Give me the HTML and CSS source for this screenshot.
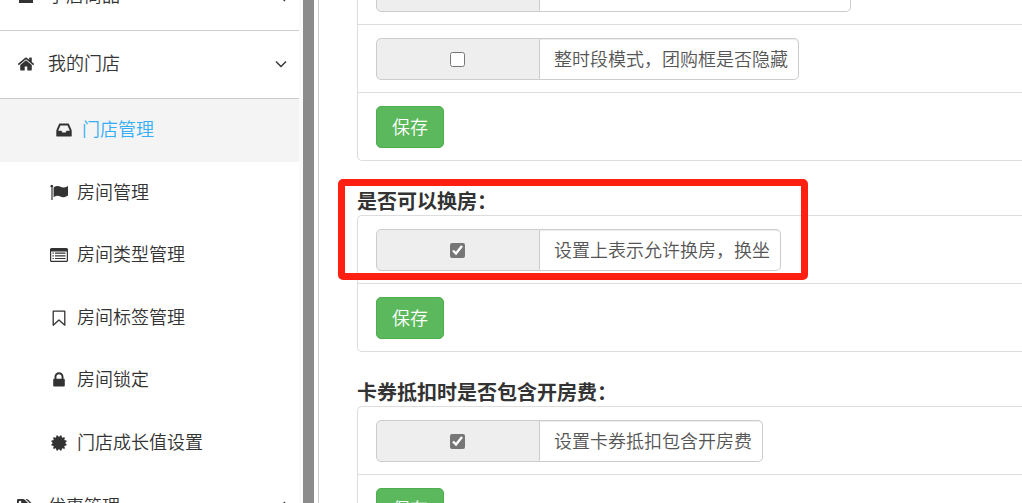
FILE: index.html
```html
<!DOCTYPE html>
<html lang="zh-CN">
<head>
<meta charset="utf-8">
<title>门店管理</title>
<link rel="stylesheet" href="styles.css">
</head>
<body>
<div class="shell">
  <nav class="sidebar">
    <div class="menu">
      <a class="menu-item" href="#">
        <svg class="icon" viewBox="0 0 18 18"><path d="M3 3h12v12H3zM2 13h14v3H2z"/></svg>
        <span>子店商品</span>
        <svg class="arrow" viewBox="0 0 12 12"><path d="M10 1 5 6l5 5"/></svg>
      </a>
      <a class="menu-item" href="#">
        <svg class="icon" viewBox="0 0 1792 1792"><path d="M1472 992v480q0 26-19 45t-45 19h-384v-384h-256v384h-384q-26 0-45-19t-19-45v-480q0-1 .5-3t.5-3l575-474 575 474q1 2 1 6zm223-69l-62 74q-8 9-21 11h-3q-13 0-21-7l-692-577-692 577q-12 8-24 7-13-2-21-11l-62-74q-8-10-7-23.5t11-21.5l719-599q32-26 76-26t76 26l244 204v-195q0-14 9-23t23-9h192q14 0 23 9t9 23v408l219 182q10 8 11 21.5t-7 23.5z"/></svg>
        <span>我的门店</span>
        <svg class="arrow" viewBox="0 0 12 12"><path d="M1 3.500l5 5 5-5"/></svg>
      </a>
      <div class="submenu">
        <a class="sub-item active" href="#">
          <svg class="icon" viewBox="0 0 1792 1792"><path d="M1151 960h316q-1-3-2.500-8t-2.500-8l-212-496h-708l-212 496q-1 2-2.500 8t-2.500 8h316l95 192h320zm513 30v482q0 26-19 45t-45 19h-1408q-26 0-45-19t-19-45v-482q0-62 25-123l238-552q10-25 36.500-42t52.500-17h832q26 0 52.500 17t36.500 42l238 552q25 61 25 123z"/></svg>
          <span>门店管理</span>
        </a>
        <a class="sub-item" href="#">
          <svg class="icon" viewBox="0 0 18 18"><path d="M1 3.200a1.300 1.300 0 1 1 1.600 0V16H1.400V3.200zM3.600 3.400C6 1.900 8 1.500 10.500 2.800c2.300 1.200 4.200.8 7.500-.9v9.600c-3 1.900-5.200 2.300-7.700 1-2.300-1.200-4.300-.8-6.700.7z"/></svg>
          <span>房间管理</span>
        </a>
        <a class="sub-item" href="#">
          <svg class="icon" viewBox="0 0 18 18"><path fill-rule="evenodd" d="M1.500 2h15A1.500 1.500 0 0 1 18 3.500v11a1.500 1.500 0 0 1-1.500 1.500h-15A1.500 1.500 0 0 1 0 14.500v-11A1.500 1.500 0 0 1 1.500 2zM1.200 5.500v8.800q0 .5.500.5h14.600q.5 0 .5-.5V5.500zM2.500 6.500h1.300v1.200H2.500zM5 6.500h10.500v1.200H5zM2.500 9.200h1.300v1.200H2.500zM5 9.200h10.500v1.200H5zM2.500 11.900h1.300v1.200H2.500zM5 11.900h10.500v1.200H5z"/></svg>
          <span>房间类型管理</span>
        </a>
        <a class="sub-item" href="#">
          <svg class="icon" viewBox="0 0 18 18"><path fill="none" stroke="currentColor" stroke-width="1.300" stroke-linejoin="round" d="M3.200 2.200h11.600v14L9 11l-5.800 5.200z"/></svg>
          <span>房间标签管理</span>
        </a>
        <a class="sub-item" href="#">
          <svg class="icon" viewBox="0 0 1792 1792"><path d="M640 768h512v-192q0-106-75-181t-181-75-181 75-75 181v192zm832 96v576q0 40-28 68t-68 28h-960q-40 0-68-28t-28-68v-576q0-40 28-68t68-28h32v-192q0-184 132-316t316-132 316 132 132 316v192h32q40 0 68 28t28 68z"/></svg>
          <span>房间锁定</span>
        </a>
        <a class="sub-item" href="#">
          <svg class="icon" viewBox="0 0 1792 1792"><path d="M1504 896l138 135q30 28 20 70-12 41-52 51l-188 48 53 186q12 41-19 70-29 31-70 19l-186-53-48 188q-10 40-51 52-12 2-19 2-31 0-51-22l-135-138-135 138q-28 30-70 20-41-11-51-52l-48-188-186 53q-41 12-70-19-31-29-19-70l53-186-188-48q-40-10-52-51-10-42 20-70l138-135-138-135q-30-28-20-70 12-41 52-51l188-48-53-186q-12-41 19-70 29-31 70-19l186 53 48-188q10-41 51-51 41-12 70 19l135 139 135-139q29-30 70-19 41 10 51 51l48 188 186-53q41-12 70 19 31 29 19 70l-53 186 188 48q40 10 52 51 10 42-20 70z"/></svg>
          <span>门店成长值设置</span>
        </a>
      </div>
      <a class="menu-item" href="#">
        <svg class="icon" viewBox="0 0 18 18"><path fill-rule="evenodd" d="M0 2.200Q0 1 1.200 1H6q1 0 1.800.8l6 6q.9.900 0 1.800l-4.400 4.600q-.9.900-1.800 0L.8 7.600Q0 6.800 0 6zM3 2.700a1.300 1.300 0 1 0 .1 0zM8.500 1h1q1 0 1.800.8l5.900 6q.9.900 0 1.800l-4.600 4.800q-.9.800-1.700 0l4.500-4.800q.9-.9 0-1.800z"/></svg>
        <span>优惠管理</span>
        <svg class="arrow" viewBox="0 0 12 12"><path d="M10 1 5 6l5 5"/></svg>
      </a>
    </div>
  </nav>
  <div class="divider"></div>
  <main class="content">
    <section class="group">
      <div class="panel">
        <div class="row">
          <div class="option">
            <span class="addon"></span>
            <span class="caption caption-wide"></span>
          </div>
        </div>
        <div class="row">
          <div class="option">
            <span class="addon"><input type="checkbox" id="hide-groupon"></span>
            <label class="caption" for="hide-groupon">整时段模式，团购框是否隐藏</label>
          </div>
        </div>
        <div class="row"><button class="save" type="button">保存</button></div>
      </div>
    </section>
    <section class="group">
      <h2 class="title">是否可以换房：</h2>
      <div class="panel">
        <div class="row">
          <div class="option">
            <span class="addon"><input type="checkbox" id="swap-room" checked></span>
            <label class="caption" for="swap-room">设置上表示允许换房，换坐</label>
          </div>
        </div>
        <div class="row"><button class="save" type="button">保存</button></div>
      </div>
      <div class="highlight"></div>
    </section>
    <section class="group">
      <h2 class="title">卡券抵扣时是否包含开房费：</h2>
      <div class="panel">
        <div class="row">
          <div class="option">
            <span class="addon"><input type="checkbox" id="coupon-fee" checked></span>
            <label class="caption" for="coupon-fee">设置卡券抵扣包含开房费</label>
          </div>
        </div>
        <div class="row"><button class="save" type="button">保存</button></div>
      </div>
    </section>
  </main>
</div>
</body>
</html>
```
FILE: styles.css
```css
* {
  box-sizing: border-box;
}

body {
  margin: 0;
  overflow: hidden;
  background: #fff;
  color: #333;
  font: 18px/24px "Noto Sans CJK SC", sans-serif;
  font-weight: 350;
}

.shell {
  display: flex;
  height: 100vh;
  overflow: hidden;
}

.sidebar {
  flex: none;
  width: 303px;
  padding-right: 4px;
  background: #fafafa;
}

.menu {
  margin-top: -37px;
  background: #fff;
}

.menu-item,
.sub-item {
  display: flex;
  align-items: center;
  color: #333;
  text-decoration: none;
}

.menu-item span,
.sub-item span {
  padding-bottom: 4px;
}

.menu-item {
  gap: 13px;
  height: 68px;
  padding: 0 12px 2px 17px;
  border-bottom: 1px solid #ccc;
}

.icon {
  flex: none;
  width: 18px;
  height: 18px;
  fill: currentColor;
}

.arrow {
  width: 12px;
  height: 12px;
  margin-left: auto;
  fill: none;
  stroke: #333;
  stroke-width: 1.4;
}

.submenu {
  display: grid;
  grid-auto-rows: 1fr;
  height: 375px;
}

.sub-item {
  gap: 9px;
  padding-left: 50px;
}

.sub-item.active {
  padding-left: 55px;
  background: #f4f4f4;
}

.active span {
  color: #36aef5;
}

.divider {
  flex: none;
  width: 16px;
  border-left: 11px solid #8b8b8b;
  border-right: 1px solid #ccc;
}

.content {
  flex: 1;
  min-width: 0;
  margin-top: -43px;
  padding-left: 38px;
}

.group {
  position: relative;
}

.title {
  margin: 0;
  padding-top: 25px;
  font-size: 20px;
  font-weight: 700;
  line-height: 29px;
}

.panel {
  border: 1px solid #ddd;
  border-right: 0;
  border-radius: 5px 0 0 5px;
}

.group:first-child .panel {
  border-top: 0;
}

.row {
  padding: 13px 18px 12px;
}

.row + .row {
  border-top: 1px solid #ddd;
}

.option {
  display: flex;
  height: 42px;
}

.addon {
  display: flex;
  align-items: center;
  justify-content: center;
  width: 164px;
  padding-right: 1px;
  border: 1px solid #ccc;
  border-radius: 5px 0 0 5px;
  background: #eee;
}

.addon input {
  width: 15px;
  height: 15px;
  margin: 0;
  accent-color: #767676;
}

.caption {
  padding: 7px 10px 9px 14px;
  border: 1px solid #ccc;
  border-left: 0;
  border-radius: 0 5px 5px 0;
  box-shadow: inset 0 1px 1px rgba(0, 0, 0, 0.075);
  color: #555;
  white-space: nowrap;
}

.caption-wide {
  width: 311px;
}

.save {
  display: block;
  height: 42px;
  padding: 0 15px 3px;
  border: 1px solid #4cae4c;
  border-radius: 5px;
  background: #5cb85c;
  color: #fff;
  font: inherit;
}

.highlight {
  position: absolute;
  top: 18px;
  left: -19px;
  width: 470px;
  height: 101px;
  border: 7px solid #ff2012;
  border-radius: 5px;
  pointer-events: none;
}
```
